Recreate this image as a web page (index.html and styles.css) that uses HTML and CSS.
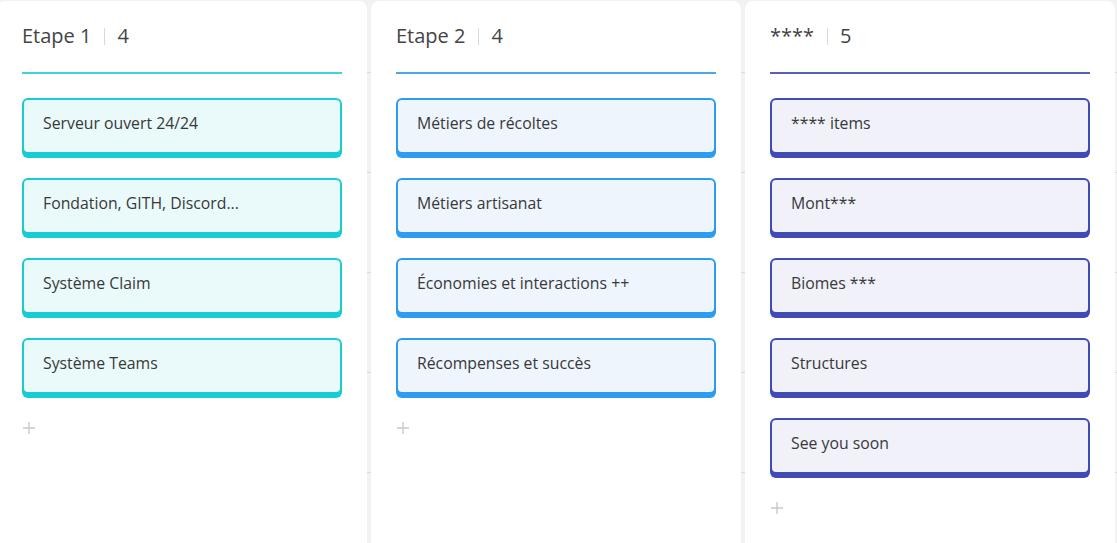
FILE: index.html
```html
<!DOCTYPE html>
<html lang="fr">
<head>
<meta charset="utf-8">
<title>Roadmap</title>
<link rel="stylesheet" href="styles.css">
</head>
<body>
<div class="board">
  <section class="column teal">
    <header class="col-head"><span class="col-title">Etape 1</span><span class="sep"></span><span class="count">4</span></header>
    <div class="cards">
      <div class="card">Serveur ouvert 24/24</div>
      <div class="card">Fondation, GITH, Discord...</div>
      <div class="card">Système Claim</div>
      <div class="card">Système Teams</div>
    </div>
    <div class="add"><svg width="12" height="12" viewBox="0 0 12 12"><path d="M6 0v12M0 6h12" stroke="#c9c9c9" stroke-width="1.4" fill="none"/></svg></div>
  </section>
  <section class="column blue">
    <header class="col-head"><span class="col-title">Etape 2</span><span class="sep"></span><span class="count">4</span></header>
    <div class="cards">
      <div class="card">Métiers de récoltes</div>
      <div class="card">Métiers artisanat</div>
      <div class="card">Économies et interactions ++</div>
      <div class="card">Récompenses et succès</div>
    </div>
    <div class="add"><svg width="12" height="12" viewBox="0 0 12 12"><path d="M6 0v12M0 6h12" stroke="#c9c9c9" stroke-width="1.4" fill="none"/></svg></div>
  </section>
  <section class="column indigo">
    <header class="col-head"><span class="col-title">****</span><span class="sep"></span><span class="count">5</span></header>
    <div class="cards">
      <div class="card">**** items</div>
      <div class="card">Mont***</div>
      <div class="card">Biomes ***</div>
      <div class="card">Structures</div>
      <div class="card">See you soon</div>
    </div>
    <div class="add"><svg width="12" height="12" viewBox="0 0 12 12"><path d="M6 0v12M0 6h12" stroke="#c9c9c9" stroke-width="1.4" fill="none"/></svg></div>
  </section>
</div>
</body>
</html>
```
FILE: styles.css
```css
html, body {
  margin: 0;
  padding: 0;
  height: 100%;
  overflow: hidden;
}
body {
  font-family: "Open Sans", "Noto Sans", sans-serif;
  background: #f2f2f2;
  color: #333;
}
.board {
  display: flex;
  gap: 4px;
  margin-left: -3px;
  padding-top: 1px;
  height: 100%;
  box-sizing: border-box;
  background-color: #f2f2f2;
  background-image: linear-gradient(to bottom, transparent 72px, #dcdcdc 72px, #dcdcdc 73px, transparent 73px);
  background-size: 100% 100px;
}
.column {
  width: 370px;
  flex: 0 0 370px;
  background: #fff;
  border-radius: 8px 8px 0 0;
  padding: 0 25px;
  box-sizing: border-box;
}
.col-head {
  display: flex;
  align-items: center;
  height: 73px;
  padding-bottom: 1px;
  box-sizing: border-box;
  border-bottom: 2px solid;
  font-size: 20px;
  line-height: 24px;
  color: #444;
}
.col-title { white-space: nowrap; }
.sep {
  width: 1px;
  height: 17px;
  background: #d9d9d9;
  margin: 0 12px 0 13px;
}
.cards {
  display: flex;
  flex-direction: column;
  gap: 24px;
  margin-top: 24px;
}
.card {
  height: 56px;
  box-sizing: border-box;
  border: 2px solid;
  border-radius: 6px;
  padding: 13px 19px 0;
  font-size: 15.8px;
  line-height: 21px;
  color: #383838;
}
.add {
  margin-top: 28px;
  margin-left: 1px;
  height: 12px;
  line-height: 0;
}
.teal .col-head { border-color: #3ed3da; }
.teal .card { border-color: #17cdd4; background: #eafafb; box-shadow: 0 4px 0 0 #17cdd4; }
.blue .col-head { border-color: #4ba7f0; }
.blue .card { border-color: #2e9cee; background: #eef5fd; box-shadow: 0 4px 0 0 #2e9cee; }
.indigo .col-head { border-color: #5461bf; }
.indigo .card { border-color: #404cb3; background: #f0f1f9; box-shadow: 0 4px 0 0 #404cb3; }
```
